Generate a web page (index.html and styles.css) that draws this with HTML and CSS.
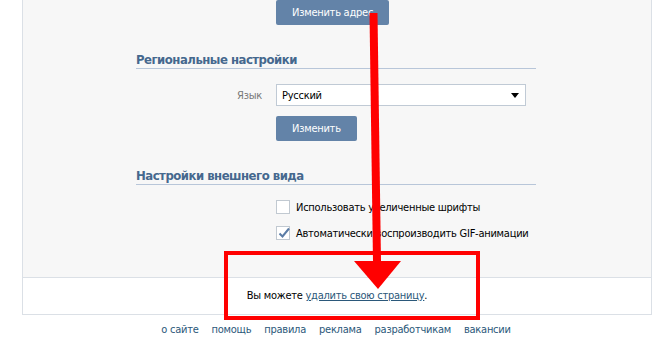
FILE: index.html
```html
<!DOCTYPE html>
<html lang="ru">

<head>
    <meta charset="UTF-8">
    <meta name="viewport" content="width=device-width, initial-scale=1.0">
    <title>Настройки</title>
    <link rel="stylesheet" href="styles.css">
</head>

<body>
    <div class="page">
        <div class="panel">
            <div class="settings">
                <div class="row">
                    <span class="label"></span>
                    <button class="btn">Изменить адрес</button>
                </div>

                <h2 class="section-title">Региональные настройки</h2>
                <div class="row">
                    <span class="label">Язык</span>
                    <div class="select">
                        <span>Русский</span>
                        <span class="select-arrow"></span>
                    </div>
                </div>
                <div class="row row-button">
                    <span class="label"></span>
                    <button class="btn">Изменить</button>
                </div>

                <h2 class="section-title">Настройки внешнего вида</h2>
                <div class="row row-check">
                    <span class="label"></span>
                    <span class="checkbox"></span>
                    <span>Использовать увеличенные шрифты</span>
                </div>
                <div class="row row-check">
                    <span class="label"></span>
                    <span class="checkbox checked">
                        <svg width="14" height="14" viewBox="0 0 14 14">
                            <path d="M2.5 7.5 L5.5 10.5 L12 2.5" fill="none" stroke="#5b7ca6" stroke-width="2"/>
                        </svg>
                    </span>
                    <span>Автоматически воспроизводить GIF-анимации</span>
                </div>
            </div>

            <div class="panel-footer">
                Вы можете <a href="#">удалить свою страницу</a>.
            </div>
        </div>

        <nav class="bottom-links">
            <a href="#">о сайте</a>
            <a href="#">помощь</a>
            <a href="#">правила</a>
            <a href="#">реклама</a>
            <a href="#">разработчикам</a>
            <a href="#">вакансии</a>
        </nav>
    </div>

    <!-- red annotation drawn over the screenshot -->
    <svg class="annotation" width="660" height="344" viewBox="0 0 660 344">
        <path d="M373.5 13 L377 262" stroke="#ff0000" stroke-width="8" fill="none"/>
        <polygon points="354,261 401,261 378,289" fill="#ff0000"/>
        <rect x="226" y="253" width="252" height="65" fill="none" stroke="#ff0000" stroke-width="4"/>
    </svg>
</body>

</html>
```

FILE: styles.css
```css
body {
    margin: 0;
    background-color: #fff;
    font-family: "DejaVu Sans Condensed", "DejaVu Sans", sans-serif;
    font-size: 11px;
    letter-spacing: -0.25px;
    color: #000;
}

.page {
    width: 660px;
    height: 344px;
    overflow: hidden;
}

.panel {
    margin-left: 22px;
    width: 628px;
    background-color: #f7f7f7;
    border: 1px solid #dbe0e6;
    border-top: none;
}

.settings {
    padding: 0 0 37px 113px;
}

.row {
    display: flex;
    align-items: center;
}

.label {
    width: 126px;
    margin-right: 14px;
    text-align: right;
    color: #777;
}

.btn {
    height: 25px;
    padding: 0 16px;
    border: none;
    border-radius: 2px;
    background-color: #6383a8;
    color: #fff;
    font-family: inherit;
    font-size: 11px;
    letter-spacing: -0.25px;
}

.section-title {
    width: 400px;
    margin: 27px 0 15px 0;
    padding-bottom: 0;
    height: 16px;
    line-height: 16px;
    font-size: 13px;
    font-weight: bold;
    letter-spacing: -0.5px;
    color: #45688e;
    border-bottom: 1px solid #b8c6d9;
}

.select {
    height: 20px;
    border: 1px solid #c0cad5;
    background-color: #fff;
    display: flex;
    align-items: center;
    justify-content: space-between;
    padding: 0 6px 0 5px;
    width: 237px;
}

.select-arrow {
    width: 0;
    height: 0;
    border-left: 4px solid transparent;
    border-right: 4px solid transparent;
    border-top: 5px solid #000;
}

.row-button {
    margin-top: 10px;
}

.row-check {
    height: 14px;
    margin-bottom: 12px;
}

.row-check:last-child {
    margin-bottom: 0;
}

.checkbox {
    width: 12px;
    height: 12px;
    border: 1px solid #c1c9d1;
    background-color: #fff;
    margin-right: 6px;
    position: relative;
}

.checkbox svg {
    position: absolute;
    left: 0;
    top: -1px;
}

.panel-footer {
    background-color: #fff;
    border-top: 1px solid #dbe0e6;
    height: 36px;
    line-height: 36px;
    text-align: center;
}

.panel-footer a {
    color: #2b587a;
    text-decoration: underline;
}

.bottom-links {
    display: flex;
    justify-content: center;
    gap: 13px;
    padding-top: 8px;
    margin-left: 12px;
}

.bottom-links a {
    color: #2b587a;
    text-decoration: none;
}

.annotation {
    position: absolute;
    left: 0;
    top: 0;
}
```
